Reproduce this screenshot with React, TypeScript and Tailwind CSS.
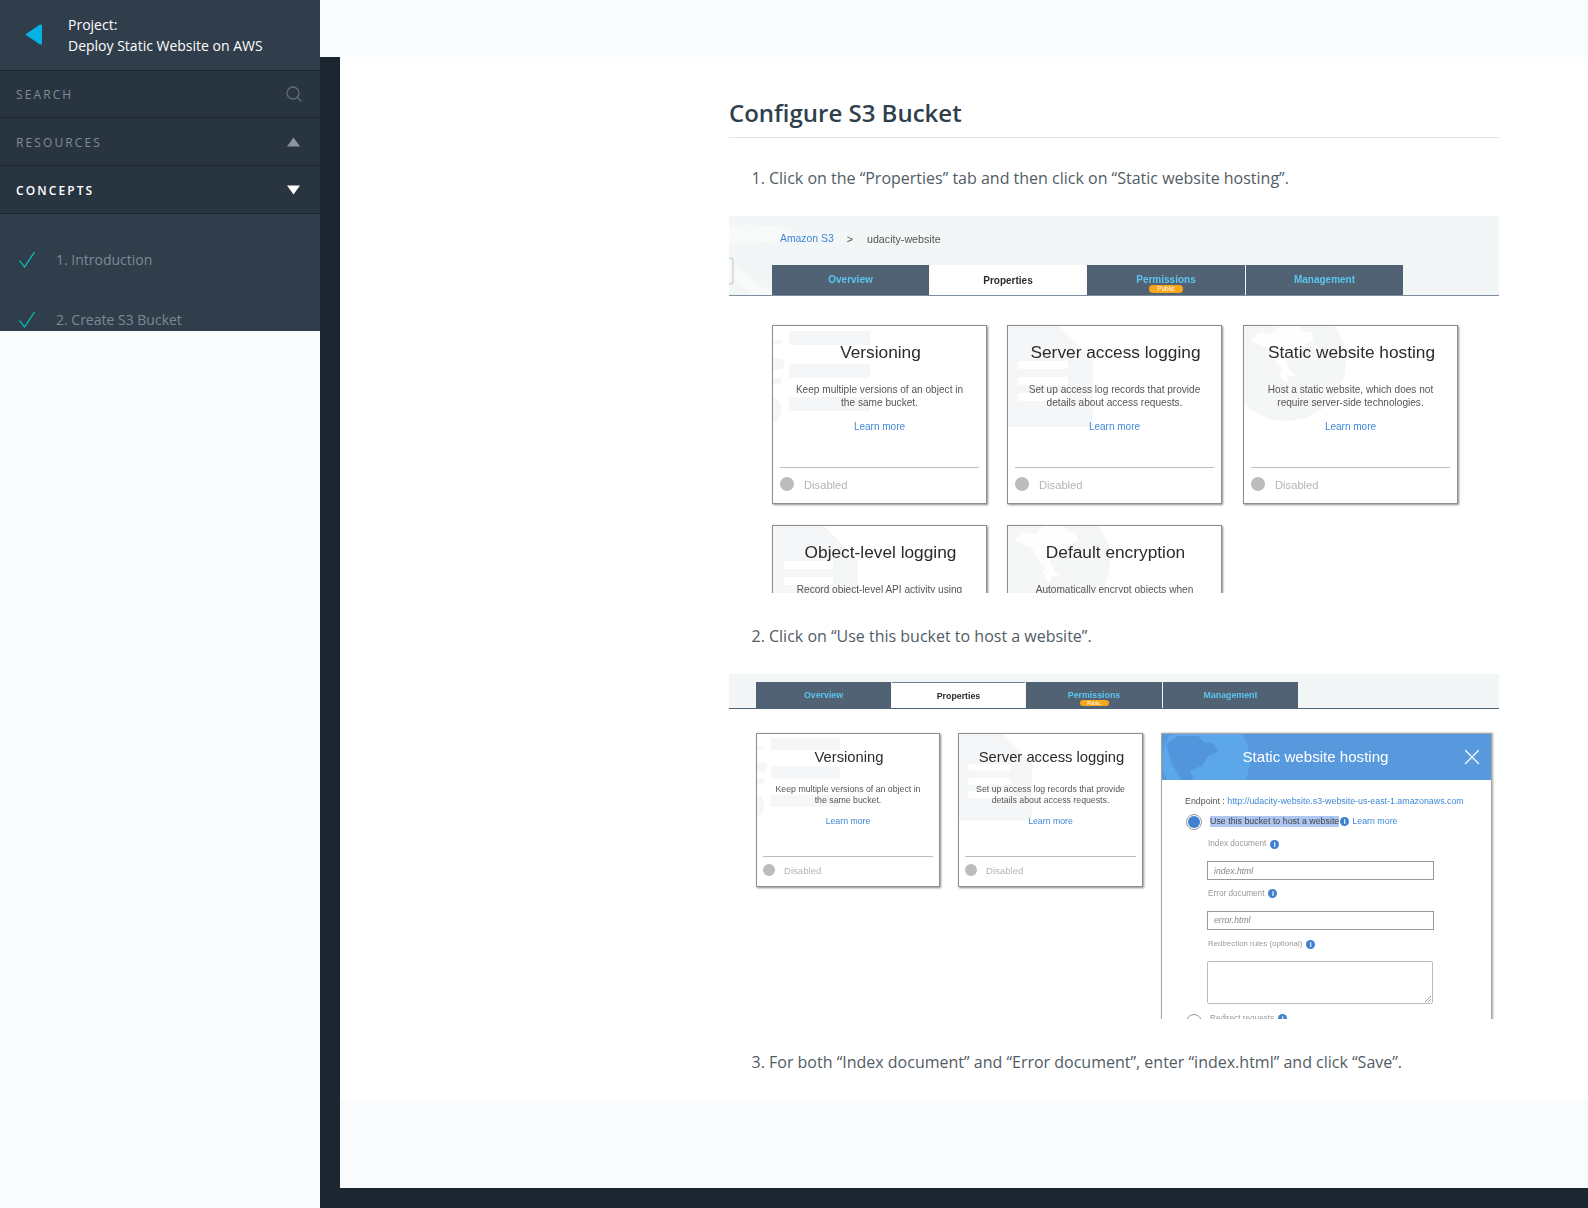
import React from "react";
import { X } from "lucide-react";

const open = "font-['Open_Sans',sans-serif]";
const helv = "font-['Liberation_Sans',Arial,sans-serif]";

function Decor({ kind }: { kind: "rows" | "doc" | "globe" }) {
  return (
    <svg className="absolute left-0 top-0 h-[179px] w-[213px]" viewBox="0 0 213 179">
      {kind === "rows" && (
        <g fill="#f4f6f7">
          <rect x="16" y="5" width="81" height="14" rx="1" />
          <rect x="16" y="38" width="81" height="14" rx="1" />
          <rect x="16" y="71" width="81" height="14" rx="1" />
          <path d="M0 14h8v4H0zM0 32h6a6 6 0 0 1 0 12H0zM0 52h8v6H0zM0 72h4l4 8v8l-4 8H0z" />
        </g>
      )}
      {kind === "doc" && (
        <g>
          <path fill="#f4f6f7" d="M0 0h51l34 34v67H0z" />
          <rect x="11" y="35" width="49" height="8" rx="1" fill="#fff" />
          <rect x="11" y="51" width="49" height="8" rx="1" fill="#fff" />
          <rect x="11" y="67" width="49" height="8" rx="1" fill="#fff" />
        </g>
      )}
      {kind === "globe" && (
        <g>
          <circle cx="42" cy="35" r="60" fill="#f5f7f7" />
          <path fill="#fff" fillOpacity="0.85" d="M6 14l10-8 12 2 8-8h18l6 6 8 1 2 7-10 5-4 8-8 2-6 6 4 10 8 6-10-1-12-14-8-14-10-4z" />
          <path fill="#fff" fillOpacity="0.85" d="M34 44l8 2 2 8-4 2z" />
        </g>
      )}
    </svg>
  );
}

type CardProps = {
  title: string;
  lines: string[];
  decor: "rows" | "doc" | "globe";
  small?: boolean;
  cut?: boolean;
  nudge?: boolean;
};

function Card({ title, lines, decor, small, cut, nudge }: CardProps) {
  return (
    <div
      className={`relative overflow-hidden border border-[#8d8d8d] bg-white shadow-[1px_1px_2px_rgba(0,0,0,0.45)] ${
        small ? "h-[154px]" : "h-[179px]"
      } ${nudge ? "ml-[1px]" : ""} ${helv}`}
    >
      <div className={small ? "origin-top-left scale-[0.857]" : ""}>
        <Decor kind={decor} />
      </div>
      <div className={`relative flex h-full flex-col ${small ? "px-[6px]" : "px-[7px]"}`}>
        <div
          className={`pl-[2px] text-center text-[#2b2b2b] ${
            small ? "mt-[13px] h-[20px] text-[14.8px] leading-[20px]" : "mt-[14px] h-[24px] text-[17.3px] leading-[24px]"
          }`}
        >
          {title}
        </div>
        <div
          className={`text-center text-[#555] ${
            small ? "mt-[17px] text-[8.75px] leading-[11px]" : "mt-[19px] text-[10.1px] leading-[13px]"
          }`}
        >
          {lines.map((l) => (
            <div key={l}>{l}</div>
          ))}
        </div>
        {!cut && (
          <>
            <div
              className={`text-center text-[#3f88d8] ${
                small ? "mt-[10px] text-[8.75px] leading-[11px]" : "mt-[11px] text-[10px] leading-[13px]"
              }`}
            >
              Learn more
            </div>
            <div className={`border-b border-[#bdbdbd] ${small ? "mt-[29px]" : "mt-[34px]"}`} />
            <div className={`flex items-center ${small ? "mt-[2px] gap-[9px]" : "mt-[5px] gap-[10px]"}`}>
              <span className={`mb-[2px] rounded-full bg-[#bcbcbc] ${small ? "h-[12px] w-[12px]" : "h-[14px] w-[14px]"}`} />
              <span className={`text-[#b5b5b5] ${small ? "text-[9.6px]" : "text-[11.2px]"}`}>Disabled</span>
            </div>
          </>
        )}
      </div>
    </div>
  );
}

function Tabs({ small }: { small?: boolean }) {
  const w = small ? "w-[135px]" : "w-[157px]";
  const text = small ? "text-[8.8px]" : "text-[10px]";
  const dark = `flex items-center justify-center bg-[#506273] font-bold text-[#5cc5ee] ${w} ${text}`;
  return (
    <div className={`flex h-full gap-[1px] ${helv}`}>
      <div className={dark}>Overview</div>
      <div
        className={
          small
            ? `flex w-[133px] items-center justify-center border-t border-[#6d7f8e] bg-white pt-[1px] font-bold text-[#2b2b2b] ${text}`
            : `flex w-[156px] items-center justify-center bg-white pt-[2px] font-bold text-[#2b2b2b] ${text}`
        }
      >
        Properties
      </div>
      <div
        className={`flex flex-col items-center bg-[#506273] font-bold text-[#5cc5ee] ${text} ${
          small ? "w-[136px] pt-[8px]" : "w-[158px] pt-[10px]"
        }`}
      >
        <span className="leading-[10px]">Permissions</span>
        <span
          className={`rounded-full bg-[#f9a61a] text-center font-normal text-white ${
            small ? "h-[6px] w-[29px] text-[5px] leading-[6px]" : "h-[8px] w-[34px] text-[6.5px] leading-[8px]"
          }`}
        >
          Public
        </span>
      </div>
      <div className={dark}>Management</div>
    </div>
  );
}

function Mock1() {
  return (
    <div className="-ml-10 mt-[26px] h-[377px] w-[770px] overflow-hidden bg-white blur-[0.3px]">
      <div className={`relative h-[80px] border-b border-[#7f8e9c] bg-[#f3f6f7] ${helv}`}>
        <svg className="absolute left-0 top-0 h-[79px] w-[70px]" viewBox="0 0 70 79">
          <ellipse cx="18" cy="18" rx="46" ry="9" fill="#f8fafa" />
          <path d="M0 45l45 34H26L0 60z" fill="#f8fafa" />
          <path d="M0 42h2a2 2 0 0 1 2 2v22a2 2 0 0 1-2 2H0" fill="none" stroke="#bcc4ca" />
        </svg>
        <div className="relative flex h-[49px] items-center pb-[4px] pl-[51px] text-[10.7px]">
          <span className="text-[10.4px] text-[#3f88d8]">Amazon S3</span>
          <span className="ml-[13px] text-[#555]">&gt;</span>
          <span className="ml-[14px] text-[#555]">udacity-website</span>
        </div>
        <div className="relative h-[30px] pl-[43px]">
          <Tabs />
        </div>
      </div>
      <div className="grid grid-cols-[215px_215px_216px] gap-x-[20px] gap-y-[21px] pl-[43px] pt-[29px]">
        <Card title="Versioning" lines={["Keep multiple versions of an object in", "the same bucket."]} decor="rows" />
        <Card title="Server access logging" lines={["Set up access log records that provide", "details about access requests."]} decor="doc" />
        <Card nudge title="Static website hosting" lines={["Host a static website, which does not", "require server-side technologies."]} decor="globe" />
        <Card cut title="Object-level logging" lines={["Record object-level API activity using"]} decor="doc" />
        <Card cut title="Default encryption" lines={["Automatically encrypt objects when"]} decor="globe" />
      </div>
    </div>
  );
}

function Info({ className }: { className: string }) {
  return (
    <span className={`inline-flex h-[9px] w-[9px] items-center justify-center rounded-full bg-[#3f80d0] text-[7px] font-bold leading-none text-white ${className}`}>
      i
    </span>
  );
}

function Field({ label, value }: { label: string; value: string }) {
  return (
    <div className="pl-[45px]">
      <div className="flex h-[14px] items-center pl-[1px] text-[8.2px] text-[#999]">
        {label}
        <Info className="ml-[4px]" />
      </div>
      <div className="mt-[10px] flex h-[19px] w-[227px] items-center border border-[#999] pl-[6px] text-[8.6px] italic text-[#888]">
        {value}
      </div>
    </div>
  );
}

function Panel() {
  return (
    <div className={`h-[290px] w-[331px] border-x border-t border-[#a5a5a5] bg-white shadow-[1px_0_2px_rgba(0,0,0,0.35)] ${helv}`}>
      <div className="relative flex h-[46px] items-center overflow-hidden bg-[#5899de] text-white">
        <svg className="absolute left-0 top-0 h-[47px] w-[100px]" viewBox="0 0 100 47">
          <circle cx="44" cy="26" r="44" fill="#5ca7e8" />
          <path d="M4 10l12-8h20l6 6 10 2 4 8-10 4-6 10-12 4 4 11H20L10 30z" fill="#5295dc" />
        </svg>
        <span className="relative w-full pr-[22px] text-center text-[15.1px]">Static website hosting</span>
        <X className="absolute right-[6px] top-[10px] h-[26px] w-[26px]" strokeWidth={1.1} />
      </div>
      <div className="pl-[23px] pt-[15px] text-[8.85px] leading-[12px] text-[#555]">
        Endpoint : <span className="text-[#3f88d8]">http://udacity-website.s3-website-us-east-1.amazonaws.com</span>
      </div>
      <div className="mt-[7px] flex h-[16px] items-center pl-[24px] text-[8.85px]">
        <span className="flex h-[16px] w-[16px] items-center justify-center rounded-full border border-[#999]">
          <span className="h-[12px] w-[12px] rounded-full bg-[#3f80d0]" />
        </span>
        <span className="mb-[1px] ml-[8px] bg-[#aec6f2] leading-[11px] text-[#444]">Use this bucket to host a website</span>
        <Info className="mb-[1px] ml-[1px]" />
        <span className="mb-[3px] ml-[3px] text-[#3f88d8]">Learn more</span>
      </div>
      <div className="mt-[7px] flex flex-col gap-[6.5px]">
        <Field label="Index document" value="index.html" />
        <Field label="Error document" value="error.html" />
        <div className="mt-[1px] pl-[45px]">
          <div className="flex h-[14px] items-center pl-[1px] text-[7.9px] text-[#999]">
            Redirection rules (optional)
            <Info className="ml-[4px]" />
          </div>
          <div className="relative mt-[10px] h-[43px] w-[226px] rounded-[2px] border border-[#bbb]">
            <svg className="absolute bottom-[1px] right-[1px]" width="6" height="6" viewBox="0 0 6 6" stroke="#777" strokeWidth="0.7">
              <path d="M0 6L6 0M3 6L6 3" />
            </svg>
          </div>
        </div>
      </div>
      <div className="mt-[10px] flex pl-[24px] text-[8.2px] text-[#999]">
        <span className="h-[16px] w-[16px] shrink-0 rounded-full border border-[#999]" />
        <span className="ml-[8px] leading-[10px]">Redirect requests</span>
        <Info className="ml-[4px]" />
      </div>
    </div>
  );
}

function Mock2() {
  return (
    <div className="-ml-10 mt-[26px] h-[345px] w-[770px] overflow-hidden bg-white blur-[0.3px]">
      <div className="h-[35px] border-b border-[#506273] bg-[#f3f6f7] pl-[27px] pt-[8px]">
        <div className="h-[26px]">
          <Tabs small />
        </div>
      </div>
      <div className="grid grid-cols-[184px_185px_331px] gap-x-[18px] pl-[27px] pt-[24px]">
        <Card small title="Versioning" lines={["Keep multiple versions of an object in", "the same bucket."]} decor="rows" />
        <Card small title="Server access logging" lines={["Set up access log records that provide", "details about access requests."]} decor="doc" />
        <Panel />
      </div>
    </div>
  );
}

function Row({ label, active, up }: { label: string; active?: boolean; up: boolean }) {
  return (
    <div className="flex h-[48px] items-center justify-between border-b border-[#1c2630] bg-[#293441] pl-[16px] pr-[20px]">
      <span className={`mt-[2px] text-[12px] tracking-[2.1px] ${active ? "font-semibold text-white" : "font-medium text-[#7f8a95]"}`}>{label}</span>
      <svg width="13" height="10" viewBox="0 0 13 10" fill={active ? "#ffffff" : "#8c959e"}>
        <path d={up ? "M6.5 0.5L13 9.5H0z" : "M0 0.5h13L6.5 9.5z"} />
      </svg>
    </div>
  );
}

function Check() {
  return (
    <svg width="18" height="18" viewBox="0 0 18 18" fill="none" stroke="#02ccba" strokeWidth="1.2" className="shrink-0">
      <path d="M1.5 9.5L6.5 16L16.5 1" />
    </svg>
  );
}

function Sidebar() {
  return (
    <aside className="w-[320px] shrink-0 bg-[#fafbfc]">
      <nav className={`h-[331px] overflow-hidden bg-[#303d4b] ${open}`}>
        <div className="flex h-[71px] items-center border-b border-[#1c2630] pl-[26px]">
          <svg width="16" height="21" viewBox="0 0 16 21" fill="#02b3e4" className="mb-[2px] shrink-0">
            <path d="M14 0.6a1.3 1.3 0 0 1 2 1v17.8a1.3 1.3 0 0 1-2 1L0.6 11.4a1.1 1.1 0 0 1 0-1.8z" />
          </svg>
          <div className="mb-[1px] ml-[26px] text-[14px] leading-[21px] text-white">
            <div>Project:</div>
            <div>Deploy Static Website on AWS</div>
          </div>
        </div>
        <div className="flex h-[47px] items-center justify-between border-b border-[#1c2630] bg-[#293441] pl-[16px] pr-[18px]">
          <span className="mt-[2px] text-[12px] font-medium tracking-[2.1px] text-[#7f8a95]">SEARCH</span>
          <svg width="16" height="16" viewBox="0 0 16 16" fill="none" stroke="#5f6c78" strokeWidth="1.3">
            <circle cx="7" cy="7" r="6" />
            <path d="M11.2 11.2L15.5 15.5" />
          </svg>
        </div>
        <Row label="RESOURCES" up />
        <Row label="CONCEPTS" active up={false} />
        <div className="flex flex-col gap-[41px] pl-[18px] pt-[36px] text-[14px] leading-[19px] text-[#7d8994]">
          <div className="flex items-center gap-[20px]">
            <Check />
            <span>1. Introduction</span>
          </div>
          <div className="flex items-center gap-[20px]">
            <Check />
            <span>2. Create S3 Bucket</span>
          </div>
        </div>
      </nav>
    </aside>
  );
}

export default function App() {
  return (
    <div className={`flex h-[1208px] w-[1588px] overflow-hidden bg-[#fafbfc] ${open}`}>
      <Sidebar />
      <div className="flex min-w-0 flex-1 flex-col">
        <div className="h-[57px] bg-[#fafbfc]" />
        <div className="flex-1 bg-[#1c2630] pb-[20px] pl-[20px]">
          <div className="flex h-full flex-col bg-[#fafbfc]">
            <main className="h-[1043px] bg-white pl-[389px] pt-[41px]">
              <div className="w-[770px]">
                <h2 className="h-[40px] border-b border-[#e2e4e6] text-[24px] font-semibold leading-[30px] text-[#303f4c]">
                  Configure S3 Bucket
                </h2>
                <ol className="mt-[28px] list-decimal pl-10 text-[16px] leading-[24px] text-[#525c65]">
                  <li>
                    Click on the “Properties” tab and then click on “Static website hosting”.
                    <Mock1 />
                  </li>
                  <li className="mt-[31px]">
                    Click on “Use this bucket to host a website”.
                    <Mock2 />
                  </li>
                  <li className="mt-[31px]">For both “Index document” and “Error document”, enter “index.html” and click “Save”.</li>
                </ol>
              </div>
            </main>
          </div>
        </div>
      </div>
    </div>
  );
}
